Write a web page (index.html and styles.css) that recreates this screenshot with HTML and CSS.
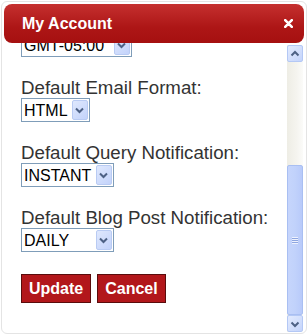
FILE: index.html
```html
<!DOCTYPE html>
<html lang="en">
<head>
    <meta charset="UTF-8">
    <meta name="viewport" content="width=device-width, initial-scale=1.0">
    <title>My Account</title>
    <link rel="stylesheet" href="styles.css">
</head>
<body>
    <div class="dialog">
        <div class="dialog-header">
            <span class="dialog-title">My Account</span>
            <svg class="close" width="9" height="9" viewBox="0 0 9 9">
                <path d="M1.2 1.2 L7.8 7.8 M7.8 1.2 L1.2 7.8" stroke="#fff" stroke-width="2.6" stroke-linecap="round"/>
            </svg>
        </div>

        <div class="dialog-body">
            <div class="scroll-area">
                <form class="account-form">
                    <div class="field first">
                        <span class="select w-lg">
                            <select><option>GMT-05:00</option></select>
                            <span class="arrow"><svg width="15" height="20" viewBox="0 0 15 20"><path d="M4 8.5 L7.5 12 L11 8.5" fill="none" stroke="#4d6185" stroke-width="2"/></svg></span>
                        </span>
                    </div>

                    <div class="field">
                        <label>Default Email Format:</label>
                        <span class="select w-sm">
                            <select><option>HTML</option></select>
                            <span class="arrow"><svg width="15" height="20" viewBox="0 0 15 20"><path d="M4 8.5 L7.5 12 L11 8.5" fill="none" stroke="#4d6185" stroke-width="2"/></svg></span>
                        </span>
                    </div>

                    <div class="field">
                        <label>Default Query Notification:</label>
                        <span class="select w-md">
                            <select><option>INSTANT</option></select>
                            <span class="arrow"><svg width="15" height="20" viewBox="0 0 15 20"><path d="M4 8.5 L7.5 12 L11 8.5" fill="none" stroke="#4d6185" stroke-width="2"/></svg></span>
                        </span>
                    </div>

                    <div class="field">
                        <label>Default Blog Post Notification:</label>
                        <span class="select w-md">
                            <select><option>DAILY</option></select>
                            <span class="arrow"><svg width="15" height="20" viewBox="0 0 15 20"><path d="M4 8.5 L7.5 12 L11 8.5" fill="none" stroke="#4d6185" stroke-width="2"/></svg></span>
                        </span>
                    </div>

                    <div class="actions">
                        <button type="button">Update</button>
                        <button type="button">Cancel</button>
                    </div>
                </form>
            </div>

            <div class="scrollbar">
                <div class="sb-btn">
                    <svg width="14" height="14" viewBox="0 0 14 14"><path d="M3.5 8.5 L7 5 L10.5 8.5" fill="none" stroke="#4d6185" stroke-width="2"/></svg>
                </div>
                <div class="sb-track">
                    <div class="sb-thumb"><span class="grip"></span></div>
                </div>
                <div class="sb-btn">
                    <svg width="14" height="14" viewBox="0 0 14 14"><path d="M3.5 5.5 L7 9 L10.5 5.5" fill="none" stroke="#4d6185" stroke-width="2"/></svg>
                </div>
            </div>
        </div>
    </div>
</body>
</html>
```

FILE: styles.css
```css
html, body {
    margin: 0;
    padding: 0;
    background-color: #fff;
}

body {
    font-family: "Liberation Sans", Arial, sans-serif;
    width: 308px;
    height: 336px;
    overflow: hidden;
}

.dialog {
    box-sizing: border-box;
    width: 306px;
    height: 333px;
    margin: 1px 0 0 1px;
    border: 1px solid #e4e4e4;
    border-radius: 6px;
    display: flex;
    flex-direction: column;
    overflow: hidden;
}

.dialog-header {
    flex: none;
    height: 39px;
    margin: 2px 2px 0 2px;
    padding: 0 11px 0 18px;
    border-radius: 8px;
    background: linear-gradient(#c5302f, #ad1616 60%, #a51010);
    display: flex;
    align-items: center;
    justify-content: space-between;
    position: relative;
    z-index: 2;
}

.dialog-title {
    color: #fff;
    font-weight: bold;
    font-size: 16px;
    margin-top: 1px;
}

.close {
    display: block;
    margin-top: -1px;
}

.dialog-body {
    flex: 1;
    display: flex;
    min-height: 0;
}

.scroll-area {
    flex: 1;
    overflow: hidden;
    padding-left: 19px;
}

.account-form {
    margin-top: -10px;
}

.field {
    margin-bottom: 20px;
}

label {
    display: block;
    font-size: 18.7px;
    line-height: 21px;
    color: #333;
}

.select {
    box-sizing: border-box;
    display: flex;
    align-items: center;
    height: 24px;
    border: 1px solid #7f9db9;
    background-color: #fff;
}

.select select {
    appearance: none;
    -webkit-appearance: none;
    flex: 1;
    min-width: 0;
    border: none;
    outline: none;
    background: transparent;
    padding: 0 0 0 2px;
    margin: 0;
    font-family: "Liberation Sans", Arial, sans-serif;
    font-size: 16px;
    color: #000;
}

.select .arrow {
    box-sizing: border-box;
    width: 16px;
    height: 20px;
    margin-right: 1px;
    border: 1px solid #b9cbf3;
    border-radius: 2px;
    background: linear-gradient(135deg, #dfe8fd, #c3d3fb);
}

.select .arrow svg {
    display: block;
    margin: -1px 0 0 -1px;
}

.w-sm { width: 69px; }
.w-md { width: 93px; }
.w-lg { width: 111px; }

.actions {
    display: flex;
    gap: 6px;
    margin-top: 22px;
}

button {
    height: 29px;
    padding: 0 7px;
    background-color: #b2171b;
    color: #fff;
    border: 1px solid #5a0c0c;
    font-family: "Liberation Sans", Arial, sans-serif;
    font-size: 16px;
    font-weight: bold;
    cursor: pointer;
}

.scrollbar {
    flex: none;
    width: 16px;
    margin: 2px 3px 1px 0;
    display: flex;
    flex-direction: column;
    background: linear-gradient(90deg, #eeede5, #f5f4ef 60%, #fbfbf9);
}

.sb-btn {
    box-sizing: border-box;
    flex: none;
    height: 17px;
    border: 1px solid #b4c8f5;
    border-radius: 2px;
    background: linear-gradient(135deg, #e3ebfe, #c4d4fb);
    display: flex;
    align-items: center;
    justify-content: center;
}

.sb-track {
    flex: 1;
    display: flex;
    flex-direction: column;
    justify-content: flex-end;
}

.sb-thumb {
    box-sizing: border-box;
    height: 150px;
    border: 1px solid #a9bff2;
    border-radius: 2px;
    background: linear-gradient(90deg, #c6d5fc, #c1d2fb 50%, #b8cafa);
    display: flex;
    align-items: center;
    justify-content: center;
}

.grip {
    display: block;
    width: 6px;
    height: 7px;
    background: repeating-linear-gradient(#eef2fe 0 1px, #8ea6e0 1px 2px);
}
```
